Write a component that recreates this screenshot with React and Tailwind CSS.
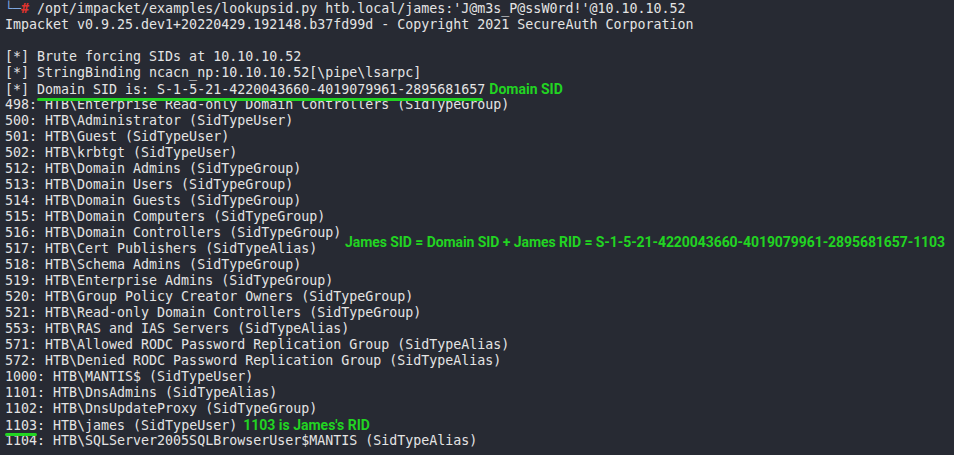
import React from "react";

const mono = { fontFamily: '"DejaVu Sans Mono", "Liberation Mono", monospace' };

const rows = [
  "498: HTB\\Enterprise Read-only Domain Controllers (SidTypeGroup)",
  "500: HTB\\Administrator (SidTypeUser)",
  "501: HTB\\Guest (SidTypeUser)",
  "502: HTB\\krbtgt (SidTypeUser)",
  "512: HTB\\Domain Admins (SidTypeGroup)",
  "513: HTB\\Domain Users (SidTypeGroup)",
  "514: HTB\\Domain Guests (SidTypeGroup)",
  "515: HTB\\Domain Computers (SidTypeGroup)",
  "516: HTB\\Domain Controllers (SidTypeGroup)",
  "517: HTB\\Cert Publishers (SidTypeAlias)",
  "518: HTB\\Schema Admins (SidTypeGroup)",
  "519: HTB\\Enterprise Admins (SidTypeGroup)",
  "520: HTB\\Group Policy Creator Owners (SidTypeGroup)",
  "521: HTB\\Read-only Domain Controllers (SidTypeGroup)",
  "553: HTB\\RAS and IAS Servers (SidTypeAlias)",
  "571: HTB\\Allowed RODC Password Replication Group (SidTypeAlias)",
  "572: HTB\\Denied RODC Password Replication Group (SidTypeAlias)",
  "1000: HTB\\MANTIS$ (SidTypeUser)",
  "1101: HTB\\DnsAdmins (SidTypeAlias)",
  "1102: HTB\\DnsUpdateProxy (SidTypeGroup)",
];

const note = "font-bold text-[#22d422] text-[14px] leading-4";
const noteFont = { fontFamily: 'Roboto, "Noto Sans", sans-serif' };

export default function App() {
  return (
    <div className="relative w-[954px] h-[455px] overflow-hidden bg-[#272a33] text-[#e4e4e4]">
      <div className="flex flex-col pt-[1px] pl-[5px] text-[13.3px] leading-4 whitespace-pre" style={mono}>
        <div className="h-4">
          <span className="text-[#7ea6e0]">└─</span>
          <span className="text-[#e0332d] font-bold">#</span>
          <span> /opt/impacket/examples/lookupsid.py htb.local/james:'J@m3s_P@ssW0rd!'@10.10.10.52</span>
        </div>
        <div className="h-4">Impacket v0.9.25.dev1+20220429.192148.b37fd99d - Copyright 2021 SecureAuth Corporation</div>
        <div className="h-4"></div>
        <div className="h-4">[*] Brute forcing SIDs at 10.10.10.52</div>
        <div className="h-4">[*] StringBinding ncacn_np:10.10.10.52[\pipe\lsarpc]</div>
        <div className="h-4 flex items-baseline">
          <span>[*] </span>
          <span className="relative">
            Domain SID is: S-1-5-21-4220043660-4019079961-2895681657
            <span className="absolute left-0 right-[2px] bottom-[-3px] h-[3px] rounded-full bg-[#22d422]"></span>
          </span>
          <span className={`ml-1 ${note}`} style={noteFont}>Domain SID</span>
        </div>
        {rows.map((r) => (
          <div key={r} className="h-4">{r}</div>
        ))}
        <div className="h-4 flex items-baseline">
          <span className="relative">
            1103
            <span className="absolute left-0 right-0 bottom-[-2px] h-[3px] rounded-full bg-[#22d422]"></span>
          </span>
          <span>: HTB\james (SidTypeUser)</span>
          <span className={`ml-[6px] ${note}`} style={noteFont}>1103 is James's RID</span>
        </div>
        <div className="h-4">1104: HTB\SQLServer2005SQLBrowserUser$MANTIS (SidTypeAlias)</div>
      </div>
      <div
        className={`absolute left-[345px] top-[234px] tracking-[-0.07px] whitespace-pre ${note}`}
        style={noteFont}
      >
        James SID = Domain SID + James RID = S-1-5-21-4220043660-4019079961-2895681657-1103
      </div>
    </div>
  );
}
